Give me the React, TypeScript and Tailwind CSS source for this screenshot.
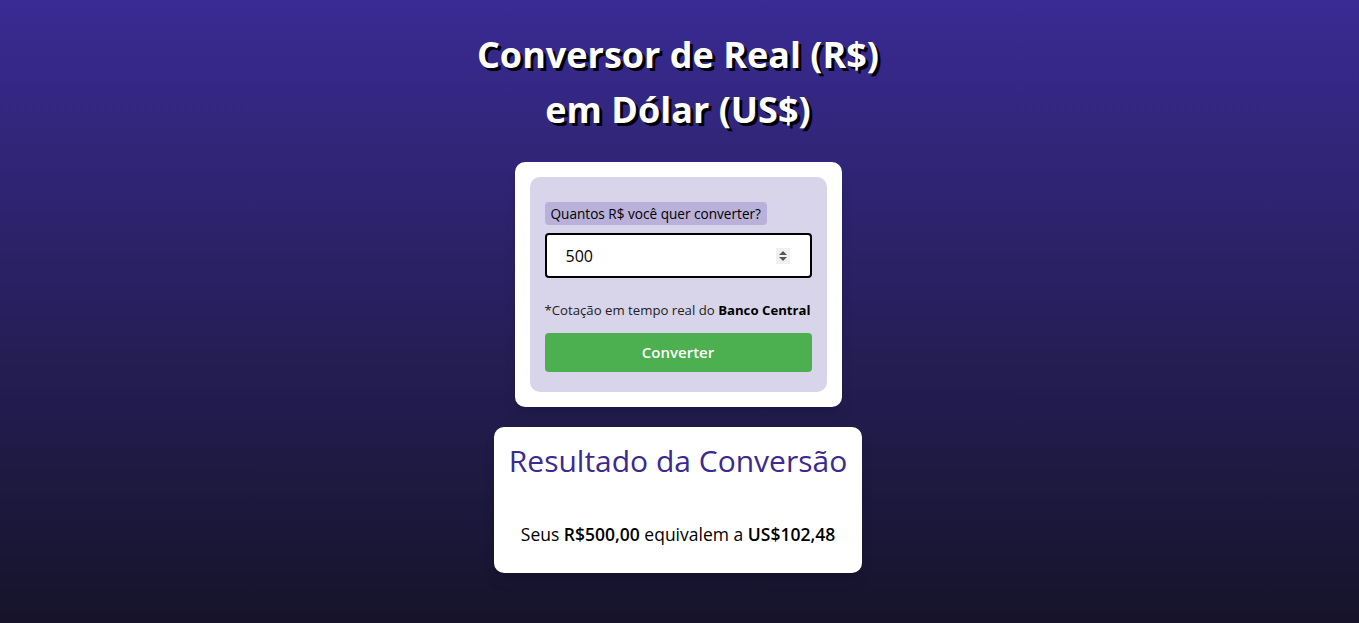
import { useState } from "react";

export default function App() {
  const [valor, setValor] = useState("500");
  const cotacao = 0.20496;
  const reais = Number(valor) || 0;
  const fmt = (n: number) =>
    n.toLocaleString("pt-BR", { minimumFractionDigits: 2, maximumFractionDigits: 2 });

  return (
    <div
      className="min-h-[623px] w-full flex flex-col items-center pr-[3px] bg-gradient-to-b from-[#3a2a94] to-[#16132a] text-black"
      style={{ fontFamily: "'Trebuchet MS', 'Open Sans', sans-serif" }}
    >
      {/* Title */}
      <h1 className="mt-[27px] text-center text-[36px] leading-[55px] font-bold text-white [text-shadow:3px_3px_0_#000]">
        Conversor de Real (R$)
        <br />
        em Dólar (US$)
      </h1>

      {/* Form card */}
      <div className="mt-[25px] w-[327px] bg-white rounded-[10px] p-[15px] shadow-lg">
        <div className="bg-[#d8d4ea] rounded-[10px] px-[15px] pt-[24px] pb-[20px]">
          <label className="inline-block bg-[#b9b1d9] rounded-[4px] px-[6px] py-[2px] text-[13.6px] leading-[19px]">
            Quantos R$ você quer converter?
          </label>
          <div className="mt-[8px] h-[45px] w-full bg-white border-2 border-black rounded-[4px] flex items-center pl-[19px] pr-[20px]">
            <input
              type="text"
              value={valor}
              onChange={(e) => setValor(e.target.value)}
              className="flex-1 min-w-0 outline-none bg-transparent text-[16px] text-black caret-black"
              autoFocus
            />
            <div className="w-[14px] h-[16px] bg-[#f0f0f0] flex items-center justify-center">
              <svg width="8" height="12" viewBox="0 0 8 12">
                <path d="M0 5 L4 1 L8 5 Z" fill="#555" />
                <path d="M0 7 L4 11 L8 7 Z" fill="#555" />
              </svg>
            </div>
          </div>
          <p className="mt-[22px] whitespace-nowrap text-[13.2px] leading-[20px] text-[#222]">
            *Cotação em tempo real do <strong className="text-black">Banco Central</strong>
          </p>
          <button className="mt-[13px] w-full h-[39px] bg-[#4caf50] rounded-[4px] text-white text-[15px] font-semibold">
            Converter
          </button>
        </div>
      </div>

      {/* Result card */}
      <div className="mt-[20px] w-[368px] h-[146px] bg-white rounded-[10px] flex flex-col items-center shadow-lg">
        <h2 className="mt-[14px] text-[30px] leading-[40px] text-[#3b2a8f] font-medium">
          Resultado da Conversão
        </h2>
        <p className="mt-[42px] text-[17.5px] leading-[22px] text-black">
          Seus <strong className="font-semibold">R${fmt(reais)}</strong> equivalem a{" "}
          <strong className="font-semibold">US${fmt(reais * cotacao)}</strong>
        </p>
      </div>
    </div>
  );
}
